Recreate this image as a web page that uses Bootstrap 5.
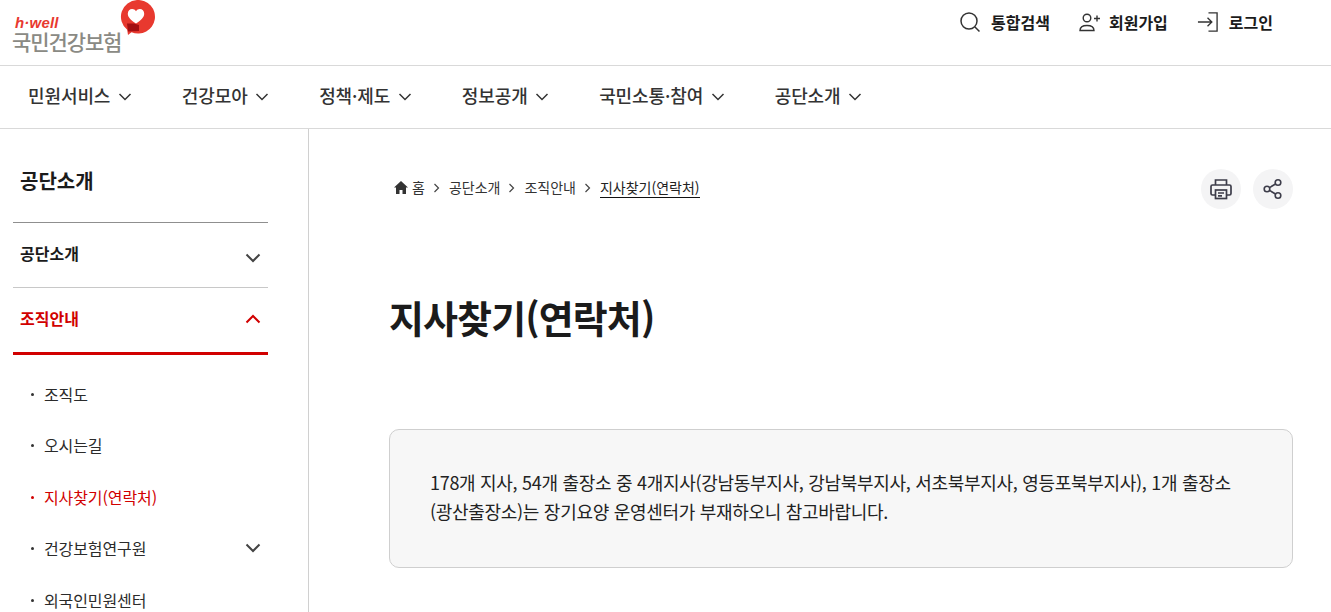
<!DOCTYPE html>
<html lang="ko"><head><meta charset="utf-8"><title>지사찾기(연락처)</title>
<link href="https://cdn.jsdelivr.net/npm/bootstrap@5.3.0/dist/css/bootstrap.min.css" rel="stylesheet">
<style>
html,body{height:612px;overflow:hidden}
body{font-family:"Noto Sans CJK KR","Noto Sans",sans-serif;color:#1b1b1b;background:#fff}
.top-bar{height:66px;border-bottom:1px solid #d9d9d9;padding:0 58px 0 13px}
.logo-box{width:142px;height:52px;position:relative}
.logo-hwell{position:absolute;left:2px;top:9px;font:italic 700 15px/14px "Liberation Sans",sans-serif;color:#e8392f;letter-spacing:.2px}
.logo-name{position:absolute;left:-1px;top:24px;font-size:21px;line-height:20px;font-weight:500;color:#8a8a84;letter-spacing:-1.1px}
.logo-heart{position:absolute;left:107px;top:-7px}
.util-link{font-size:16px;font-weight:700;color:#1b1b1b;text-decoration:none}
.util-row{gap:29px;margin-top:-22px}
.util-gap-wide{gap:10px}
.util-gap-narrow{gap:8px}
.main-menu{height:63px;border-bottom:1px solid #d9d9d9;padding:0 0 4px 28px;gap:50px}
.main-item{font-size:18px;font-weight:500;color:#333;gap:7.500px;letter-spacing:-.1px;text-decoration:none;line-height:24px}
.main-item svg{margin-top:4px}
.page-body{height:483px}
.side-col{width:309px;flex:none;border-right:1px solid #d0d0d0;padding:0 40px 0 13px}
.side-title{font-size:20px;font-weight:700;height:94px;border-bottom:1px solid #8f8f8f;padding:35px 0 0 7px;line-height:34px}
.side-head{font-size:16px;font-weight:700;padding:0 7px 4px;height:65px;color:#1b1b1b;text-decoration:none}
.side-head.is-plain{border-bottom:1px solid #c8c8c8}
.side-head.is-plain svg{margin-top:9px}
.side-head.is-open{color:#d10000;height:67px;border-bottom:3px solid #d10000}
.side-head.is-open svg{margin-top:1px}
.side-sub{padding-top:13px}
.side-sub-item{height:51.500px;font-size:16px;color:#2b2b2b;padding:0 7px 0 31px;position:relative;letter-spacing:-.1px;text-decoration:none}
.side-sub-item::before{content:"";position:absolute;left:18px;top:50%;width:3px;height:3px;margin-top:-1px;border-radius:50%;background:#333}
.side-sub-item.is-current{color:#d10000}
.side-sub-item.is-current::before{background:#d10000}
.content-col{padding:0 38px 0 80px;min-width:0}
.crumb-row{height:80px;padding-top:40px}
.crumb-list{font-size:14px;color:#333;gap:8px;padding:8px 0 0 5px}
.crumb-home{margin-right:-4px}
.crumb-now{border-bottom:1px solid #111;line-height:19px;color:#222}
.round-gap{gap:12px}
.round-btn{width:40px;height:40px;border-radius:50%;background:#f4f4f5;border:0;padding:0}
.page-title{font-size:38px;font-weight:700;line-height:52px;margin:82px 0 86px;letter-spacing:-.9px;color:#1b1b1b}
.notice-box{height:139px;border:1px solid #cfcfcf;border-radius:10px;background:#f7f7f7;padding:38px 40px;font-size:18px;line-height:29px;color:#222;letter-spacing:-.3px}
</style></head><body>
<header class="top-bar d-flex justify-content-between align-items-center">
  <a class="logo-box d-block text-decoration-none" href="#">
    <span class="logo-hwell">h·well</span>
    <span class="logo-name">국민건강보험</span>
    <svg class="logo-heart" width="35" height="36" viewBox="0 0 35 36"><path d="M17 0a17 16.800 0 1 1-5.500 32.300L8 35l-.8-5.200A17 16.800 0 0 1 17 0z" fill="#e8392f"/><path d="M16 23.500c-5.500-3.500-8.200-6.500-8.200-9.700 0-2.800 2-4.800 4.300-4.800 1.700 0 3 .9 3.900 2.300.9-1.400 2.200-2.300 3.900-2.300 2.300 0 4.300 2 4.300 4.800 0 3.200-2.700 6.200-8.200 9.700z" fill="#fff"/><path d="M7 23.500h7l5 1.500v6l-11 .5z" fill="#a30f12"/></svg>
  </a>
  <div class="util-row d-flex align-items-center">
    <a class="util-link util-gap-wide d-flex align-items-center" href="#"><svg width="22" height="22" viewBox="0 0 22 22" fill="none" stroke="#333" stroke-width="1.500"><circle cx="10" cy="10" r="8"/><path d="M16 16l4.500 4.500"/></svg>통합검색</a>
    <a class="util-link util-gap-narrow d-flex align-items-center" href="#"><svg width="22" height="20" viewBox="0 0 22 20" fill="none" stroke="#333" stroke-width="1.400"><circle cx="8" cy="6" r="3.800"/><path d="M1 18.500c0-3 2.500-5 7-5s7 2 7 5zM15 6.500h6M18 3.500v6"/></svg>회원가입</a>
    <a class="util-link util-gap-wide d-flex align-items-center" href="#"><svg width="22" height="22" viewBox="0 0 23 22" fill="none" stroke="#333" stroke-width="1.400"><path d="M12 1.500h9v19h-9M1 11h14M11 6.500l4.500 4.500-4.500 4.500"/></svg>로그인</a>
  </div>
</header>
<nav class="main-menu d-flex align-items-center">
  <a class="main-item d-flex align-items-center" href="#">민원서비스<svg width="14" height="8" viewBox="0 0 14 8" fill="none" stroke="#333" stroke-width="1.500"><path d="M1.500 1l5.500 5.500L12.500 1"/></svg></a>
  <a class="main-item d-flex align-items-center" href="#">건강모아<svg width="14" height="8" viewBox="0 0 14 8" fill="none" stroke="#333" stroke-width="1.500"><path d="M1.500 1l5.500 5.500L12.500 1"/></svg></a>
  <a class="main-item d-flex align-items-center" href="#">정책·제도<svg width="14" height="8" viewBox="0 0 14 8" fill="none" stroke="#333" stroke-width="1.500"><path d="M1.500 1l5.500 5.500L12.500 1"/></svg></a>
  <a class="main-item d-flex align-items-center" href="#">정보공개<svg width="14" height="8" viewBox="0 0 14 8" fill="none" stroke="#333" stroke-width="1.500"><path d="M1.500 1l5.500 5.500L12.500 1"/></svg></a>
  <a class="main-item d-flex align-items-center" href="#">국민소통·참여<svg width="14" height="8" viewBox="0 0 14 8" fill="none" stroke="#333" stroke-width="1.500"><path d="M1.500 1l5.500 5.500L12.500 1"/></svg></a>
  <a class="main-item d-flex align-items-center" href="#">공단소개<svg width="14" height="8" viewBox="0 0 14 8" fill="none" stroke="#333" stroke-width="1.500"><path d="M1.500 1l5.500 5.500L12.500 1"/></svg></a>
</nav>
<div class="page-body d-flex">
  <aside class="side-col">
    <div class="side-title">공단소개</div>
    <a class="side-head is-plain d-flex justify-content-between align-items-center" href="#">공단소개<svg width="16" height="10" viewBox="0 0 16 10" fill="none" stroke="#444" stroke-width="2"><path d="M1.500 1.500L8 8l6.500-6.500"/></svg></a>
    <a class="side-head is-open d-flex justify-content-between align-items-center" href="#">조직안내<svg width="16" height="10" viewBox="0 0 16 10" fill="none" stroke="#d10000" stroke-width="2"><path d="M1.500 8.500L8 2l6.500 6.500"/></svg></a>
    <div class="side-sub">
      <a class="side-sub-item d-flex align-items-center" href="#">조직도</a>
      <a class="side-sub-item d-flex align-items-center" href="#">오시는길</a>
      <a class="side-sub-item is-current d-flex align-items-center" href="#">지사찾기(연락처)</a>
      <a class="side-sub-item d-flex justify-content-between align-items-center" href="#">건강보험연구원<svg width="16" height="10" viewBox="0 0 16 10" fill="none" stroke="#444" stroke-width="2"><path d="M1.500 1.500L8 8l6.500-6.500"/></svg></a>
      <a class="side-sub-item d-flex align-items-center" href="#">외국인민원센터</a>
    </div>
  </aside>
  <main class="content-col flex-grow-1">
    <div class="crumb-row d-flex justify-content-between align-items-start">
      <div class="crumb-list d-flex align-items-center">
        <svg class="crumb-home" width="14" height="13" viewBox="0 0 14 13" fill="#333"><path d="M7 0L0 6.500h2V13h3.500V9h3v4H12V6.500h2z"/></svg>
        <span>홈</span>
        <svg width="8" height="10" viewBox="0 0 8 10" fill="none" stroke="#444" stroke-width="1.200"><path d="M1.500 1l4 4-4 4"/></svg>
        <span>공단소개</span>
        <svg width="8" height="10" viewBox="0 0 8 10" fill="none" stroke="#444" stroke-width="1.200"><path d="M1.500 1l4 4-4 4"/></svg>
        <span>조직안내</span>
        <svg width="8" height="10" viewBox="0 0 8 10" fill="none" stroke="#444" stroke-width="1.200"><path d="M1.500 1l4 4-4 4"/></svg>
        <span class="crumb-now">지사찾기(연락처)</span>
      </div>
      <div class="d-flex round-gap ms-auto">
        <button class="round-btn d-flex align-items-center justify-content-center" aria-label="인쇄"><svg width="24" height="24" viewBox="0 0 24 24" fill="none" stroke="#3d3d4a" stroke-width="1.700"><path d="M6.500 8V3h11v5M6 18H3.500a1.500 1.500 0 0 1-1.500-1.500v-7A1.500 1.500 0 0 1 3.500 8h17A1.500 1.500 0 0 1 22 9.500v7a1.500 1.500 0 0 1-1.500 1.500H18"/><rect x="6.500" y="13" width="11" height="8.500"/><path d="M9 16h6M9 18.800h4"/></svg></button>
        <button class="round-btn d-flex align-items-center justify-content-center" aria-label="공유"><svg width="22" height="22" viewBox="0 0 22 22" fill="none" stroke="#3d3d4a" stroke-width="1.600"><circle cx="16" cy="4.500" r="2.800"/><circle cx="5" cy="11" r="2.800"/><circle cx="16" cy="17.500" r="2.800"/><path d="M7.500 9.600l6-3.600M7.500 12.400l6 3.600"/></svg></button>
      </div>
    </div>
    <h1 class="page-title">지사찾기(연락처)</h1>
    <div class="notice-box">178개 지사, 54개 출장소 중 4개지사(강남동부지사, 강남북부지사, 서초북부지사, 영등포북부지사), 1개 출장소(광산출장소)는 장기요양 운영센터가 부재하오니 참고바랍니다.</div>
  </main>
</div>
<script src="https://cdn.jsdelivr.net/npm/bootstrap@5.3.0/dist/js/bootstrap.bundle.min.js"></script>
</body></html>
